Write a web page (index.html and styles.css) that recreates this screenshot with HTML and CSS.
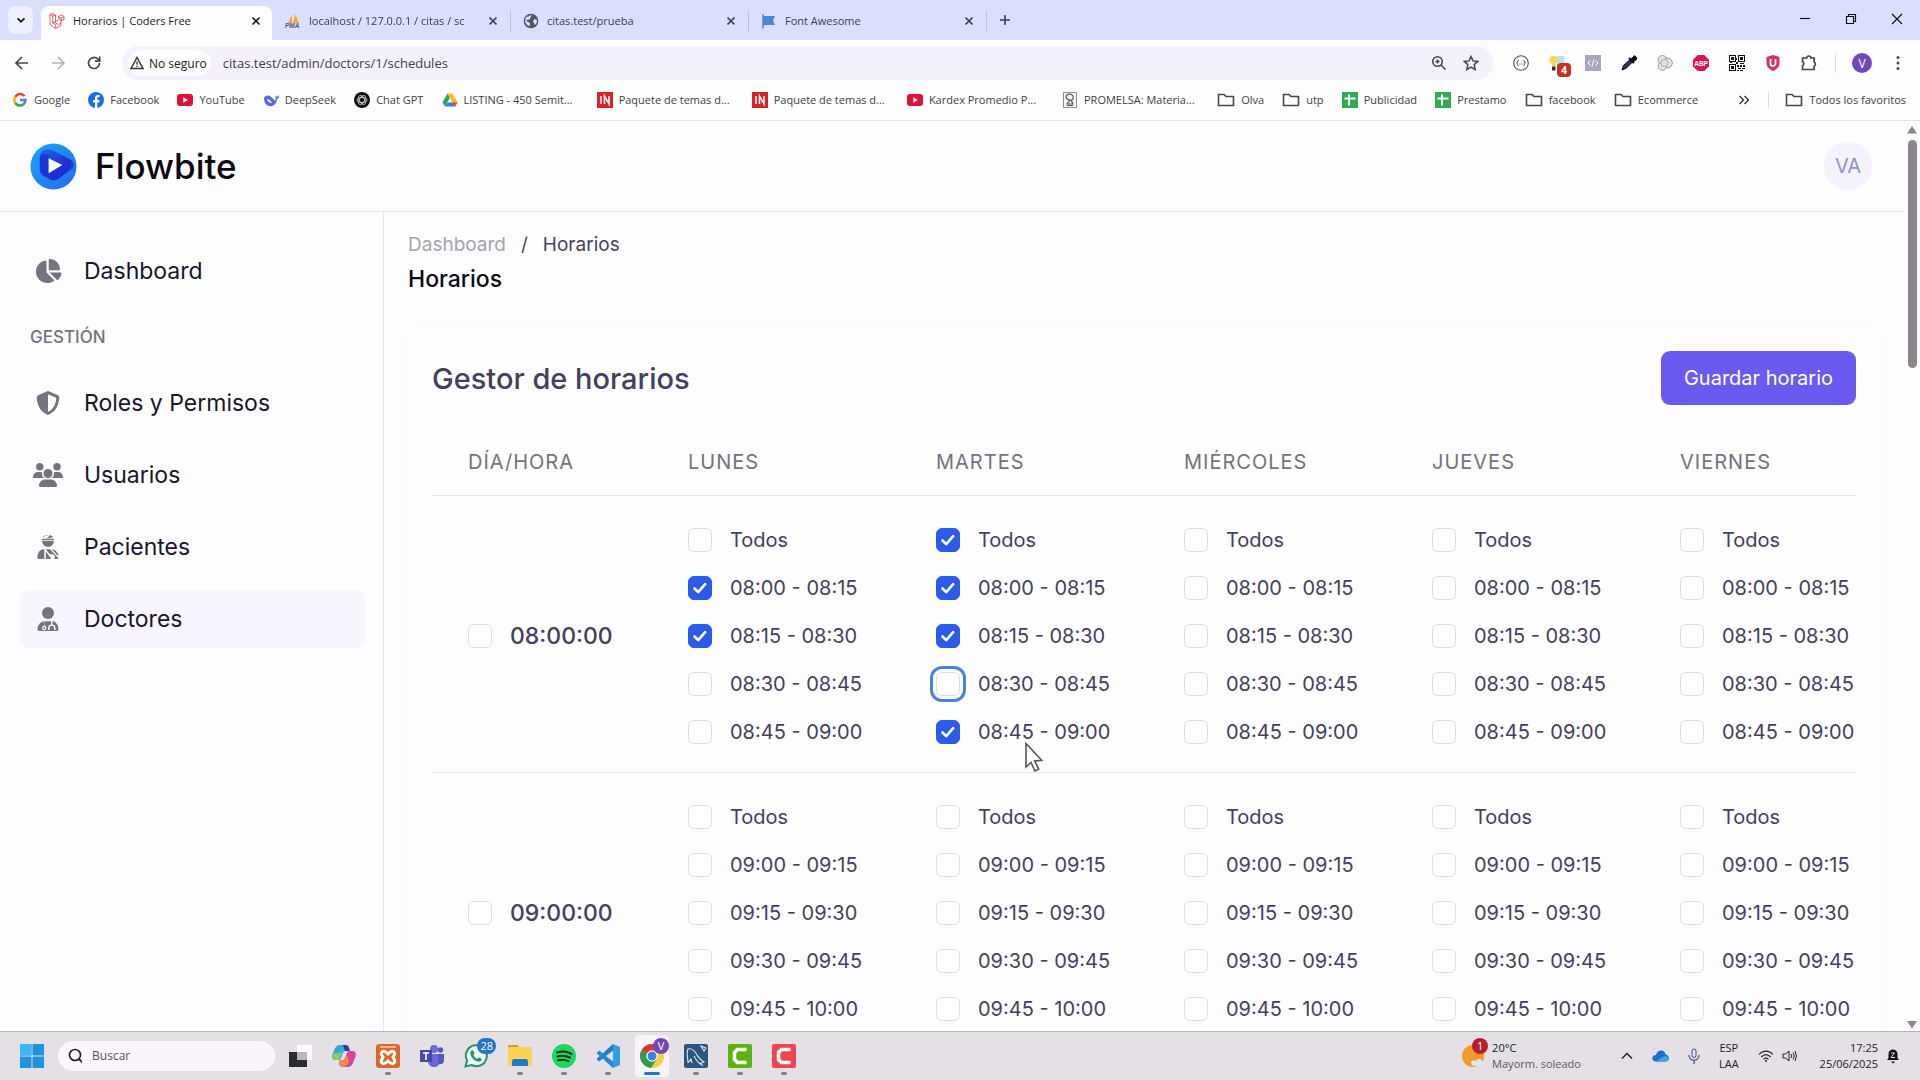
FILE: index.html
```
<!DOCTYPE html>
<html lang="es">
  <head>
    <meta charset="utf-8">
    <title>Horarios | Coders Free</title>
    <link rel="stylesheet" href="styles.css">
  </head>
  <body>
    <svg class="defs" aria-hidden="true">
      <symbol id="i-close" viewBox="0 0 16 16"><path d="M4.500 4.500l7 7M11.500 4.500l-7 7" fill="none" stroke="currentColor" stroke-width="1.700"/></symbol>
      <symbol id="i-folder" viewBox="0 0 18 16"><path d="M1.500 13.500v-11h5.500l2 2h7.500v9z" fill="none" stroke="#47464d" stroke-width="1.600" stroke-linejoin="round"/></symbol>
      <symbol id="i-youtube" viewBox="0 0 16 16"><rect y="2" width="16" height="12" rx="3" fill="#e0103a"/><path d="M6.300 5.300v5.400l4.500-2.700z" fill="#fff"/></symbol>
      <symbol id="i-sheet" viewBox="0 0 16 16"><path d="M0 0h16v16H0z" fill="#34a853"/><path d="M7 2.500v11M2.500 6.500h11" stroke="#fff" stroke-width="2"/></symbol>
      <symbol id="i-in" viewBox="0 0 16 16"><path d="M0 0h16v16H0z" fill="#d8232f"/><path d="M4 4v8M7.500 12V4l4.500 8V4" fill="none" stroke="#fff" stroke-width="1.500"/></symbol>
    </svg>

    <div class="tabs">
      <button class="tab-search" aria-label="Buscar pestañas"><svg width="10" height="10" viewBox="0 0 10 10"><path d="M1.500 3.300L5 6.700l3.500-3.400" fill="none" stroke="#1b1b2b" stroke-width="1.800"/></svg></button>
      <div class="tab active">
        <svg class="fav" viewBox="0 0 16 16"><path d="M1 1.500l3-1 2.500 1.500v8l3 1.700 2.500-1.500V7L9.500 5.500V3.500L12.500 2 15 3.500v3L12 8M1 1.500v10l5.500 4 5.500-3v-2.300M1 1.500l2.700 1.500v7l5.800-3M3.700 3l2.800-1M3.700 10l3 1.700v3.700M9.500 3.700l2.700 1.500V8M12.200 5.200l2.800-1.600" fill="none" stroke="#e8505b" stroke-width=".9"/></svg>
        <span>Horarios | Coders Free</span>
        <button aria-label="Cerrar"><svg width="16" height="16"><use href="#i-close"/></svg></button>
      </div>
      <div class="tab">
        <svg class="fav" viewBox="0 0 16 16"><path d="M3 10L7 2v8M8 10l2-9 4 9z" fill="#f5a83c"/><text x="0" y="15" font-size="6.500" font-weight="700" font-style="italic" fill="#55527c" font-family="Liberation Sans">PMA</text></svg>
        <span class="fade">localhost / 127.0.0.1 / citas / sc</span>
        <button aria-label="Cerrar"><svg width="16" height="16"><use href="#i-close"/></svg></button>
      </div>
      <div class="tab">
        <svg class="fav" viewBox="0 0 16 16"><circle cx="8" cy="8" r="7.300" fill="#55566b"/><path d="M3 4c2 0 3-1 5-2 1 2-1 2-1 4-1 1-3 0-4 2 2 1 4 1 4 3 0 1 0 2-1 2-2-1-3-2-4-5M11 6l3 1c0 3-1 4-2 5-1-1 0-2-2-3z" fill="#dce1fd"/></svg>
        <span>citas.test/prueba</span>
        <button aria-label="Cerrar"><svg width="16" height="16"><use href="#i-close"/></svg></button>
      </div>
      <div class="tab">
        <svg class="fav" viewBox="0 0 16 16"><path d="M2 1v14.500" stroke="#4b87d8" stroke-width="1.500"/><path d="M2 3h12l-2 4.500 2 4.500H2z" fill="#4b87d8"/></svg>
        <span>Font Awesome</span>
        <button aria-label="Cerrar"><svg width="16" height="16"><use href="#i-close"/></svg></button>
      </div>
      <button class="new-tab" aria-label="Nueva pestaña"><svg width="14" height="14" viewBox="0 0 14 14"><path d="M7 2v10M2 7h10" stroke="#3a3d5c" stroke-width="1.600"/></svg></button>
      <div class="window-buttons">
        <button aria-label="Minimizar"><svg width="12" height="12"><path d="M1 5.500h10" stroke="#111" stroke-width="1.200"/></svg></button>
        <button aria-label="Restaurar"><svg width="12" height="12"><path d="M1.500 3.500h7v7h-7zM3.500 3V1.500h7v7H9" fill="none" stroke="#111" stroke-width="1.200"/></svg></button>
        <button aria-label="Cerrar ventana"><svg width="12" height="12"><path d="M1 1l10 10M11 1L1 11" stroke="#111" stroke-width="1.200"/></svg></button>
      </div>
    </div>

    <div class="toolbar">
      <div class="nav-buttons">
        <button aria-label="Atrás"><svg width="16" height="16" viewBox="0 0 16 16"><path d="M14 8H2.500M8 2L2 8l6 6" fill="none" stroke="#47464d" stroke-width="1.700"/></svg></button>
        <button aria-label="Adelante"><svg width="16" height="16" viewBox="0 0 16 16"><path d="M2 8h11.500M8 2l6 6-6 6" fill="none" stroke="#b5b4ba" stroke-width="1.700"/></svg></button>
        <button aria-label="Recargar"><svg width="16" height="16" viewBox="0 0 16 16"><path d="M13.500 8A5.500 5.500 0 1 1 11.800 4L13.500 5.700M13.700 1.500v4.700H9" fill="none" stroke="#47464d" stroke-width="1.700"/></svg></button>
      </div>
      <div class="omnibox">
        <button class="insecure"><svg width="14" height="14" viewBox="0 0 14 14"><path d="M7 1.500L13 12.500H1z" fill="none" stroke="#333" stroke-width="1.400"/><path d="M7 5.500v3.300M7 9.700v1.400" stroke="#333" stroke-width="1.300"/></svg>No seguro</button>
        <input class="url" aria-label="Dirección" value="citas.test/admin/doctors/1/schedules">
        <svg width="16" height="16" viewBox="0 0 16 16"><circle cx="6.500" cy="6.500" r="4.700" fill="none" stroke="#47464d" stroke-width="1.600"/><path d="M10 10l4.500 4.500M6.500 4.500v4M4.500 6.500h4" stroke="#47464d" stroke-width="1.600"/></svg>
        <svg width="16" height="16" viewBox="0 0 16 16"><path d="M8 1.500l2 4.400 4.700.5-3.500 3.200 1 4.800L8 12l-4.200 2.400 1-4.800L1.300 6.400 6 5.900z" fill="none" stroke="#47464d" stroke-width="1.500"/></svg>
      </div>
      <div class="extensions">
        <svg viewBox="0 0 16 16"><circle cx="8" cy="8" r="7.300" fill="none" stroke="#555" stroke-width="1.100"/><path d="M5.500 5.300c-1.500 0-.5 2.400-1.800 2.700 1.300.3.300 2.700 1.800 2.700M10.500 5.300c1.500 0 .5 2.400 1.800 2.700-1.300.3-.3 2.700-1.800 2.700" fill="none" stroke="#333"/><path d="M6.500 9h.8M8.700 9h.8" stroke="#333"/></svg>
        <span class="ext-badge"><svg viewBox="0 0 16 16"><path d="M8 1h7.500v9H8z" fill="#b5e3f2"/><path d="M.5 3.500C1 0 8.500-.5 8.500 4 8.500 7 6.500 8 6.500 11H3C3 8 0 7 .5 3.500z" fill="#f7d94c"/><path d="M3 11.500h3.500v4H3z" fill="#333"/></svg><b>4</b></span>
        <svg viewBox="0 0 16 16"><path d="M0 0h16v16H0z" fill="#aaa7bd"/><path d="M5.500 5.500L3 8l2.500 2.500M10.500 5.500L13 8l-2.500 2.500M9 4.500l-2 7" fill="none" stroke="#fff"/></svg>
        <svg viewBox="0 0 16 16"><path d="M1 15l1.500-4.500L9 4.500l2.500 2.500L5.500 13z" fill="#33325a" stroke="#0b0a18"/><path d="M8 3l5 5M9.500 5.500l4-4 2 2-4 3.500z" fill="#0b0a18" stroke="#0b0a18" stroke-width="2"/></svg>
        <svg viewBox="0 0 16 16"><circle cx="5.500" cy="5" r="4.500" fill="#e6e5e8" stroke="#98979b"/><circle cx="10.500" cy="8" r="4.800" fill="#e6e5e8" stroke="#98979b"/><circle cx="5.500" cy="11" r="4.300" fill="#e6e5e8" stroke="#98979b"/><circle cx="7.500" cy="8" r="3.800" fill="#dddce0" stroke="#aeadb2"/></svg>
        <svg viewBox="0 0 16 16"><path d="M4.700 0h6.600L16 4.700v6.600L11.300 16H4.700L0 11.300V4.700z" fill="#d9164e"/><text x="1.200" y="10.500" font-size="6.500" font-weight="700" fill="#fff" font-family="Liberation Sans">ABP</text></svg>
        <svg viewBox="0 0 16 16" shape-rendering="crispEdges"><path d="M0 0h7v7H0zM9 0h7v7H9zM0 9h7v7H0z" fill="#111"/><path d="M1 1h5v5H1zM10 1h5v5h-5zM1 10h5v5H1z" fill="#fff"/><path d="M2 2h3v3H2zM11 2h3v3h-3zM2 11h3v3H2zM7 3h1v2H7zM7 7h2v2H7zM11 8h4v1h-4zM8 10h2v2H8zM11 10h2v2h-2zM14 10h2v2h-2zM9 13h3v1H9zM13 13h3v1h-3zM8 15h2v1H8zM11 15h3v1h-3zM1 7h2v1H1z" fill="#111"/></svg>
        <svg viewBox="0 0 16 16"><path d="M8 0l6.500 2v6c0 4-3 6.500-6.500 8-3.500-1.500-6.500-4-6.500-8V2z" fill="#cf3569"/><path d="M5.500 4v4.500a2.500 2.500 0 0 0 5 0V4" fill="none" stroke="#fff" stroke-width="1.700"/></svg>
        <svg viewBox="0 0 16 16"><path d="M1.500 3h4.300a2 2 0 0 1 4 0h3.400v4.300a2 2 0 0 1 0 3.700v3.500H1.500v-3.800a2 2 0 0 0 0-3.800z" fill="none" stroke="#47464d" stroke-width="1.700"/></svg>
      </div>
      <div class="profile">
        <button class="profile-pic">V</button>
        <button class="menu" aria-label="Menú"><svg width="4" height="16"><g fill="#47464d"><circle cx="2" cy="2.500" r="1.500"/><circle cx="2" cy="8" r="1.500"/><circle cx="2" cy="13.500" r="1.500"/></g></svg></button>
      </div>
    </div>

    <div class="bookmarks">
      <nav>
        <a href="#"><svg viewBox="0 0 16 16" fill="none" stroke-width="2.600"><path d="M12.500 4A5.500 5.500 0 0 0 3.300 5" stroke="#e94335"/><path d="M3.300 5a5.500 5.500 0 0 0 0 6" stroke="#fbbc05"/><path d="M3.300 11A5.500 5.500 0 0 0 11.500 12.200" stroke="#34a853"/><path d="M11.500 12.200A5.500 5.500 0 0 0 13.500 8H8" stroke="#4285f4"/></svg>Google</a>
        <a href="#"><svg viewBox="0 0 16 16"><circle cx="8" cy="8" r="8" fill="#1b6fe4"/><path d="M7 16v-5.500H5V8h2V6.300C7 4 8.300 3 10 3l1.500.1v2h-1C9.500 5.100 9.300 5.700 9.300 6.500V8h2.200l-.4 2.500H9.300V16z" fill="#fff"/></svg>Facebook</a>
        <a href="#"><svg><use href="#i-youtube"/></svg>YouTube</a>
        <a href="#"><svg viewBox="0 0 16 16"><path d="M1 6c2-3 5-3 7-1 2 1 3 3 4 4 1-1 1-3 0-5l2 .7L16 3c0 3-1 4-2 4 0 3-2 6-5 7-4 1-8-2-8-8z" fill="#5468e8"/><path d="M4 7c2 0 4 2 5 4-2 0-4-1-5-4z" fill="#fff"/></svg>DeepSeek</a>
        <a href="#"><svg viewBox="0 0 16 16"><circle cx="8" cy="8" r="8" fill="#111"/><g fill="none" stroke="#ddd" stroke-width=".8"><ellipse cx="8" cy="8" rx="5" ry="2.500"/><ellipse cx="8" cy="8" rx="5" ry="2.500" transform="rotate(60 8 8)"/><ellipse cx="8" cy="8" rx="5" ry="2.500" transform="rotate(120 8 8)"/></g></svg>Chat GPT</a>
        <a class="long" href="#"><svg viewBox="0 0 16 16"><path d="M5.500 1.500L.5 10.500 3 14.500 8 5.500z" fill="#2fa35a"/><path d="M5.500 1.500h5l5 9h-5z" fill="#f7bd27"/><path d="M3 14.500l2.500-4h10l-2.500 4z" fill="#3e78e6"/><path d="M13 14.500l-2.500-4h5z" fill="#e2483c"/></svg>LISTING - 450 Semit...</a>
        <a class="long" href="#"><svg><use href="#i-in"/></svg>Paquete de temas d...</a>
        <a class="long" href="#"><svg><use href="#i-in"/></svg>Paquete de temas d...</a>
        <a class="long" href="#"><svg><use href="#i-youtube"/></svg>Kardex Promedio P...</a>
        <a class="long" href="#"><svg viewBox="0 0 16 16"><path d="M1.500.5h13v15h-13z" fill="#f8f8fa" stroke="#8c8b93"/><path d="M4 4c2-3 6-2 7 0s0 4-2 4l2 4H5l3-4C5 8 4 6 4 4zM5 13.500h6" fill="none" stroke="#55545c" stroke-width="1.200"/></svg>PROMELSA: Materia...</a>
        <a href="#"><svg class="folder"><use href="#i-folder"/></svg>Olva</a>
        <a href="#"><svg class="folder"><use href="#i-folder"/></svg>utp</a>
        <a href="#"><svg><use href="#i-sheet"/></svg>Publicidad</a>
        <a href="#"><svg><use href="#i-sheet"/></svg>Prestamo</a>
        <a href="#"><svg class="folder"><use href="#i-folder"/></svg>facebook</a>
        <a href="#"><svg class="folder"><use href="#i-folder"/></svg>Ecommerce</a>
      </nav>
      <button class="more" aria-label="Más marcadores"><svg width="12" height="12"><path d="M1.500 2l4 4-4 4M6.500 2l4 4-4 4" fill="none" stroke="#333" stroke-width="1.400"/></svg></button>
      <a class="all" href="#"><svg class="folder"><use href="#i-folder"/></svg>Todos los favoritos</a>
    </div>

    <div class="viewport">
      <div class="page">
        <header>
          <a class="brand" href="#">
            <svg width="47" height="47" viewBox="0 0 48 48">
              <defs>
                <linearGradient id="g1" x1="0" y1="0" x2="1" y2="1"><stop offset="0" stop-color="#17a5fb"/><stop offset="1" stop-color="#256be9"/></linearGradient>
                <linearGradient id="g2" x1="0" y1="0" x2="1" y2="1"><stop offset="0" stop-color="#2467ee"/><stop offset=".6" stop-color="#1c32cf"/><stop offset="1" stop-color="#2266ea"/></linearGradient>
              </defs>
              <circle cx="24" cy="24" r="23.500" fill="url(#g1)"/>
              <path d="M10 14c1-7 7-9 14-6l16 8c5 3 6 6 4 10l-14 10c-4 3-8 3-11 0-5-2-8-3-9-8z" fill="url(#g2)"/>
              <path d="M20 31l12-7c4-2 5-5 4-9 7 4 8 8 3 13L28 37c-5 2-8 0-8-6z" fill="#1c2fd0"/>
              <path d="M10 16c0-5 5-6 9-3v22c-6-2-9-5-9-10z" fill="#1b35d6"/>
              <path d="M19 15.500l14 7-14 8.500z" fill="#fff"/>
            </svg>
            Flowbite
          </a>
          <button class="avatar">VA</button>
        </header>

        <div class="body">
          <aside>
            <a href="#"><svg viewBox="0 0 576 512"><path d="M304 240V16.600c0-9 7-16.600 16-16.600C443.700 0 544 100.300 544 224c0 9-7.600 16-16.600 16H304zM32 272C32 150.700 122.100 50.300 239 34.300c9.200-1.300 17 6.100 17 15.400V288L412.500 444.500c6.700 6.700 6.200 17.700-1.500 23.100C371.800 495.600 323.800 512 272 512C139.500 512 32 404.600 32 272zm526.400 16c9.300 0 16.600 7.800 15.400 17c-7.700 55.900-34.600 105.600-73.900 142.300c-6 5.600-15.400 5.200-21.200-.7L320 288H558.400z"/></svg>Dashboard</a>
            <h2>GESTIÓN</h2>
            <a href="#"><svg viewBox="0 0 512 512"><path d="M256 0c4.600 0 9.200 1 13.400 2.900L457.700 82.800c22 9.300 38.400 31 38.300 57.200c-.5 99.200-41.300 280.700-213.600 363.200c-16.700 8-36.100 8-52.800 0C57.300 420.700 16.500 239.200 16 140c-.1-26.200 16.300-47.900 38.300-57.200L242.700 2.900C246.800 1 251.400 0 256 0zm0 66.800V444.800C394 378 431.100 230.100 432 141.400L256 66.800z"/></svg>Roles y Permisos</a>
            <a href="#"><svg viewBox="0 0 640 512"><circle cx="144" cy="80" r="80"/><circle cx="512" cy="80" r="80"/><circle cx="320" cy="224" r="96"/><path d="M0 298.700C0 239.800 47.800 192 106.700 192h42.600c16 0 31 3.500 44.600 9.700-8 55 8 90 45 118.300H21.300C9.600 320 0 310.400 0 298.700zM401 320c38-28 53-64 45-118.300 13.600-6.200 28.600-9.700 44.600-9.700h42.600C592.200 192 640 239.800 640 298.700c0 11.700-9.600 21.300-21.300 21.300zM128 485.300C128 411.700 187.700 352 261.300 352h117.400C452.300 352 512 411.700 512 485.300c0 14.700-12 26.700-26.700 26.700H154.700c-14.700 0-26.700-12-26.700-26.700z"/></svg>Usuarios</a>
            <a href="#"><svg viewBox="0 0 448 512"><path d="M240 0c38 0 72 17 94 48L200 75 268 2zM232 0L113 48C138 15 180-2 232 0zM98 80h252v32H98zM98 128h252c0 70-56 126-126 126S98 198 98 128zM120 304h24v208H22C-2 512-6 488 0 452c12-84 54-140 120-148zM176 304h92l180 190c-2 10-10 18-24 18h-70c36-50 12-100-40-100h-50zM176 345l120 167H176zM300 304c84 8 140 66 148 152L336 338z"/></svg>Pacientes</a>
            <a class="current" href="#"><svg viewBox="0 0 448 512"><circle cx="224" cy="128" r="128"/><path d="M0 482c0-98 64-178 152-178v88c-34 8-56 32-56 62a46 46 0 1 0 92 0c0-28-10-50-28-60v-90h128v68c-44 8-64 36-64 80v36h32v-36c0-70 96-70 96 0v36h32v-36c0-44-20-72-64-80v-66c80 8 128 84 128 176 0 16-12 30-30 30H30c-18 0-30-14-30-30z"/><circle cx="142" cy="454" r="20"/></svg>Doctores</a>
          </aside>

          <main>
            <nav class="breadcrumb"><a href="#">Dashboard</a><span>/</span><span>Horarios</span></nav>
            <h1>Horarios</h1>

            <section class="card">
              <div class="card-head">
                <h2>Gestor de horarios</h2>
                <button>Guardar horario</button>
              </div>
              <div class="table-wrap">
                <table>
                  <thead>
                    <tr>
                      <th>DÍA/HORA</th>
                      <th>LUNES</th>
                      <th>MARTES</th>
                      <th>MIÉRCOLES</th>
                      <th>JUEVES</th>
                      <th>VIERNES</th>
                    </tr>
                  </thead>
                  <tbody id="schedule"></tbody>
                </table>
              </div>
            </section>
          </main>
        </div>
      </div>
      <div class="scrollbar">
        <svg width="10" height="8"><path d="M5 0l5 7.500H0z" fill="#8b868c"/></svg>
        <div class="track"><div class="thumb"></div></div>
        <svg width="10" height="8"><path d="M5 7.500L0 0h10z" fill="#8b868c"/></svg>
      </div>
    </div>

    <div class="taskbar">
      <button class="start" aria-label="Inicio"><svg width="24" height="24"><path d="M0 0h11.500v11.500H0zM12.500 0H24v11.500H12.500zM0 12.500h11.500V24H0zM12.500 12.500H24V24H12.500z" fill="#1f94dc"/><path d="M0 0h11.500v11.500H0z" fill="#3db6ee"/></svg></button>
      <label class="search">
        <svg width="16" height="16"><circle cx="7" cy="7" r="5.500" fill="none" stroke="#222" stroke-width="1.700"/><path d="M11 11l4 4" stroke="#222" stroke-width="1.900"/></svg>
        <input aria-label="Buscar" placeholder="Buscar">
      </label>
      <div class="apps">
        <button aria-label="Vista de tareas"><svg viewBox="0 0 24 24"><path d="M9 1h15v15H9z" fill="#fcfbfd"/><path d="M1 8h18v15H1z" fill="#2b2a30"/><path d="M9 8h10v8H9z" fill="#b9b7bc"/></svg></button>
        <button aria-label="Copilot"><svg viewBox="0 0 24 24"><path d="M8 1h6c3 0 3 4 4 6h-5c-3 0-3 9-6 9H4c-5 0-4-4-3-7 2-5 3-8 7-8z" fill="#35a6df"/><path d="M2 9c3 0 5 2 8-3l-3 10H4c-4 0-4-3-2-7z" fill="#8fce57"/><path d="M16 23h-6c-3 0-3-4-3-7h4c3 0 3-9 6-9h3c5 0 4 4 3 7-2 5-3 9-7 9z" fill="#d6459b"/><path d="M7 16h4c2 0 3-3 4-5l2 6c-1 4-4 6-7 6-2 0-3-4-3-7z" fill="#f48a4d"/><path d="M11 1h3c3 0 3 4 4 6h-5z" fill="#253e9d"/></svg></button>
        <button class="open" aria-label="XAMPP"><svg viewBox="0 0 24 24"><rect width="24" height="24" rx="3" fill="#dc682c"/><path d="M4 3h16" stroke="#f8c8a8" stroke-width="1.500"/><path d="M6 8c2-2 4 0 6 2 2-2 4-4 6-2s0 3-1 5c1 2 3 4 1 6s-4 0-6-2c-2 2-4 4-6 2s0-4 1-6c-1-2-3-3-1-5z" fill="none" stroke="#fff" stroke-width="3"/></svg></button>
        <button aria-label="Teams"><svg viewBox="0 0 24 24"><circle cx="14" cy="5" r="4" fill="#6f6ad6"/><circle cx="20.500" cy="6" r="2.700" fill="#5457bb"/><path d="M8 10h12v7c0 8-12 8-12 0z" fill="#6d67d2"/><path d="M18 10h6v6c0 4-3 5-6 4z" fill="#5457bb"/><path d="M0 6h12v12H0z" fill="#444aa8"/><path d="M3 9h6M6 9v7" stroke="#fff" stroke-width="1.600"/></svg></button>
        <button aria-label="WhatsApp"><svg viewBox="0 0 24 24"><path d="M1.500 22.500l1.500-6A10.500 10.500 0 1 1 7.500 21z" fill="#eef5f1" stroke="#23936a" stroke-width="2"/><path d="M7 7c2-2 3 1 3.500 2.500L9.300 11c1 2 2.200 3.200 4 4l1.500-1.500c2 .5 4 1.500 2 3.500C12 20 4 11 7 7z" fill="#23936a"/></svg><b class="badge">28</b></button>
        <button class="open" aria-label="Explorador"><svg viewBox="0 0 24 24"><path d="M0 5V2c0-1 1-1 1-1h8l3 3z" fill="#d59b1f"/><rect y="3" width="24" height="19" rx="1.500" fill="#f9d253"/><path d="M4 22v-4c0-2 1-3 2-3h12c1 0 2 1 2 3v4z" fill="#2179c6"/></svg></button>
        <button class="open" aria-label="Spotify"><svg viewBox="0 0 24 24"><circle cx="12" cy="12" r="12" fill="#1ed760"/><path d="M5 8.500c5-1.500 10-1 14.500 1.300M5.500 12.500c4.500-1.300 8.500-.8 12.500 1.200M6 16.200c4-1 7-.6 10.500 1" fill="none" stroke="#10301c" stroke-width="2" stroke-linecap="round"/></svg></button>
        <button class="open" aria-label="Visual Studio Code"><svg viewBox="0 0 24 24"><path d="M17 6.500L3 17.500 1 15.500v-1L17 0z" fill="#1f7ec8"/><path d="M17 17.500L3 6.500 1 8.500v1L17 24z" fill="#2389d3"/><path d="M17 0l7 3v18l-7 3z" fill="#2fa0e6"/></svg></button>
        <button class="open focused" aria-label="Chrome"><svg viewBox="0 0 24 24"><circle cx="12" cy="12" r="12" fill="#f9cf3c"/><path d="M12 12L1.600 6A12 12 0 0 1 22.400 6z" fill="#d9382c"/><path d="M12 12L1.600 6A12 12 0 0 0 11 24l6-9z" fill="#2e9c4e"/><circle cx="12" cy="12" r="5.700" fill="#fff"/><circle cx="12" cy="12" r="4.500" fill="#3d80ea"/></svg><b class="badge purple">V</b></button>
        <button class="open" aria-label="MySQL Workbench"><svg viewBox="0 0 24 24"><rect width="24" height="24" rx="2" fill="#2b5680"/><path d="M4 19c0-5-2-10 0-14 4-1 7 2 9 6 2 3 3 5 7 7l-3 1 1 2c-4-2-6-5-8-9M4 19l3-4 1 4M17 2l5 2-2 3z" fill="none" stroke="#dbe7f2" stroke-width="1.100"/></svg></button>
        <button class="open" aria-label="Camtasia"><svg viewBox="0 0 24 24"><rect width="24" height="24" rx="2" fill="#5bb30f"/><path d="M18.500 5.500h-9l-3 3v7l3 3h9" fill="none" stroke="#fff" stroke-width="3.500"/></svg></button>
        <button class="open" aria-label="Camtasia Recorder"><svg viewBox="0 0 24 24"><rect width="24" height="24" rx="2" fill="#ee4552"/><path d="M18.500 5.500h-9l-3 3v7l3 3h9" fill="none" stroke="#fff" stroke-width="3.500"/></svg></button>
      </div>
      <div class="weather">
        <span class="sun"><svg width="24" height="24"><circle cx="11" cy="12" r="11" fill="#f29a2e"/><path d="M10 21c-3-4 2-6 4-4 2-4 7-2 6 1 4 0 3 4 0 4h-8z" fill="#dbe6f7"/></svg><b class="badge red">1</b></span>
        <p>20°C<br><span>Mayorm. soleado</span></p>
      </div>
      <div class="tray">
        <svg width="12" height="12"><path d="M1 8.500l5-5 5 5" fill="none" stroke="#222" stroke-width="1.500"/></svg>
        <svg width="17" height="12" viewBox="0 0 17 12"><path d="M4 11.500C-1 11.500-1 5 4 5c1-6 9-6 9.500-.5C18 5 18 11.500 13.500 11.500z" fill="#1f6fc8"/><path d="M4 11.500L12 6c6 0 6 5.500 1.500 5.500z" fill="#3aa5ea"/></svg>
        <svg width="12" height="16"><rect x="4" y="1" width="4" height="8.500" rx="2" fill="#e3e5f3" stroke="#3c4f8c"/><path d="M1 7c0 7 10 7 10 0M6 12.500V16" fill="none" stroke="#3c4f8c" stroke-width="1.200"/></svg>
        <p class="lang">ESP<br>LAA</p>
        <svg width="16" height="12"><path d="M1 4.500c4-4.500 10-4.500 14 0M3.300 7c3-3 6.400-3 9.400 0M5.500 9.300c1.500-1.500 3.500-1.500 5 0" fill="none" stroke="#222" stroke-width="1.100"/><circle cx="8" cy="11" r="1" fill="#222"/></svg>
        <svg width="15" height="12"><path d="M1 4h2.500L7 1v10L3.500 8H1z" fill="none" stroke="#222"/><path d="M9 4q1.500 2 0 4M11 2.500q2.500 3.500 0 7M13 1q3 5 0 10" fill="none" stroke="#222"/></svg>
      </div>
      <p class="clock">17:25<br>25/06/2025</p>
      <svg class="bell" width="14" height="16"><path d="M1 12l1.500-2V6c0-6 9-6 9 0v4l1.500 2zM5 13.500h4L7 15.500z" fill="#111"/><path d="M5 5h3.500L5 9.500h4" fill="none" stroke="#e2dde3"/></svg>
    </div>

    <svg class="cursor" width="20" height="32" viewBox="0 0 20 32"><path d="M2 1.500V25l5-4.500 4 8.500 3.700-1.800-4-8.200 7-.7z" fill="#fff" stroke="#55535c" stroke-width="1.600"/></svg>

    <script src="script.js"></script>
  </body>
</html>
```
FILE: styles.css
```
* {
  box-sizing: border-box;
}
body {
  margin: 0;
  height: 100vh;
  display: flex;
  flex-direction: column;
  overflow: hidden;
  background: #fdfdfe;
  font-family: "Open Sans", "Noto Sans", sans-serif;
  font-size: 12px;
  color: #3f3e46;
}
button {
  border: 0;
  padding: 0;
  background: none;
  font: inherit;
  color: inherit;
}
a {
  color: inherit;
  text-decoration: none;
}
p,
h1,
h2 {
  margin: 0;
}
.defs {
  position: absolute;
  width: 0;
  height: 0;
}

/* browser tabs */
.tabs {
  display: flex;
  flex: none;
  height: 40px;
  padding: 6px 0 0 8px;
  background: #dadffd;
  font-size: 11px;
  color: #3a3d5c;
}
.tab-search {
  display: grid;
  place-items: center;
  width: 25px;
  height: 28px;
  margin-right: 8px;
  border-radius: 8px;
  background: #eef0fe;
}
.tab {
  display: flex;
  align-items: center;
  gap: 8px;
  width: 238px;
  padding: 0 9px 5px 13px;
}
.tab + .tab + .tab {
  background: linear-gradient(#b9bfdd, #b9bfdd) 0 5px / 1px 20px no-repeat;
}
.tab span {
  flex: 1;
  white-space: nowrap;
  overflow: hidden;
}
.tab .fade {
  mask-image: linear-gradient(90deg, #000 92%, transparent);
}
.tab button {
  display: flex;
}
.tab.active {
  width: 231px;
  padding: 0 8px 5px;
  border-radius: 8px 8px 0 0;
  background: #fdfdfe;
  color: #1b1b2b;
}
.fav {
  width: 16px;
  height: 16px;
  flex: none;
}
.new-tab {
  display: flex;
  align-items: center;
  padding: 0 12px 6px;
  background: linear-gradient(#b9bfdd, #b9bfdd) 0 5px / 1px 20px no-repeat;
}
.window-buttons {
  display: flex;
  margin-left: auto;
}
.window-buttons button {
  width: 46px;
  padding-bottom: 6px;
}

/* address bar */
.toolbar {
  display: flex;
  align-items: center;
  flex: none;
  height: 46px;
  padding: 0 20px 0 14px;
}
.nav-buttons {
  display: flex;
  gap: 20px;
  margin-right: 20px;
}
.nav-buttons button {
  display: flex;
}
.omnibox {
  display: flex;
  align-items: center;
  flex: 1;
  gap: 16px;
  height: 34px;
  padding: 0 14px 0 6px;
  border-radius: 17px;
  background: #f4f1fd;
}
.insecure {
  display: flex;
  align-items: center;
  gap: 5px;
  height: 26px;
  margin-right: -4px;
  border-radius: 13px;
  padding: 0 4px 0 2px;
  background: #fdfdfe;
  color: #222;
}
.url {
  flex: 1;
  border: 0;
  padding: 0;
  background: none;
  font: inherit;
  font-size: 13px;
  color: #3f3e46;
}
.extensions {
  display: flex;
  gap: 20px;
  margin: 0 18px 0 20px;
}
.extensions svg {
  display: block;
  width: 16px;
  height: 16px;
}
.ext-badge {
  position: relative;
}
.ext-badge b {
  position: absolute;
  left: 8px;
  top: 8px;
  width: 14px;
  height: 14px;
  border-radius: 4px;
  background: #c9301f;
  color: #fff;
  font-size: 10px;
  line-height: 14px;
  text-align: center;
}
.profile {
  display: flex;
  align-items: center;
  gap: 24px;
  padding-left: 16px;
  border-left: 1px solid #dcd9e6;
}
.profile-pic {
  width: 20px;
  height: 20px;
  border-radius: 50%;
  background: #7248b9;
  color: #fff;
}
.menu {
  display: flex;
}

/* bookmarks bar */
.bookmarks {
  display: flex;
  align-items: center;
  flex: none;
  height: 35px;
  padding: 0 14px 7px 12px;
  border-bottom: 1px solid #e3e2e8;
  font-size: 11px;
  white-space: nowrap;
}
.bookmarks nav {
  display: flex;
  flex: 1;
  justify-content: space-between;
}
.bookmarks a {
  display: flex;
  align-items: center;
  gap: 6px;
}
.bookmarks a.long {
  min-width: 137px;
}
.bookmarks a svg {
  width: 16px;
  height: 16px;
}
.bookmarks a .folder {
  width: 18px;
}
.more {
  display: flex;
  margin: 0 18px 0 40px;
}
.all {
  padding-left: 16px;
  border-left: 1px solid #dcd9e6;
}

/* page */
.viewport {
  display: flex;
  flex: 1;
  min-height: 0;
  font-family: Inter, "Open Sans", sans-serif;
}
.page {
  flex: 1;
  min-width: 0;
  display: flex;
  flex-direction: column;
  overflow: hidden;
}
.scrollbar {
  display: flex;
  flex-direction: column;
  align-items: center;
  gap: 6px;
  width: 16px;
  padding: 5px 0 2px;
}
.track {
  flex: 1;
}
.thumb {
  width: 9px;
  height: 26%;
  border-radius: 5px;
  background: #8b868c;
}
header {
  display: flex;
  align-items: center;
  justify-content: space-between;
  flex: none;
  height: 91px;
  padding: 0 32px 0 30px;
  border-bottom: 1px solid #e3e2e8;
}
.brand {
  display: flex;
  align-items: center;
  gap: 18px;
  font-size: 35px;
  font-weight: 500;
  color: #0a0a0f;
}
.avatar {
  width: 48px;
  height: 48px;
  border-radius: 50%;
  background: #f5f2fe;
  color: #8b92d3;
  font-size: 20px;
}
.body {
  display: flex;
  flex: 1;
  min-height: 0;
}
aside {
  display: flex;
  flex-direction: column;
  gap: 14px;
  flex: none;
  width: 384px;
  padding: 30px 18px 0 20px;
  border-right: 1px solid #e8e5ef;
}
aside a {
  display: flex;
  align-items: center;
  gap: 20px;
  height: 58px;
  padding: 0 12px;
  border-radius: 9px;
  font-size: 23px;
  color: #17162a;
}
aside a.current {
  background: #f9f5fe;
}
aside svg {
  width: 32px;
  height: 24px;
  fill: #76727f;
}
aside h2 {
  height: 46px;
  padding-left: 10px;
  font-size: 17px;
  font-weight: 500;
  line-height: 46px;
  color: #76727f;
}
main {
  flex: 1;
  min-width: 0;
  padding: 18px 24px 0;
}
.breadcrumb {
  display: flex;
  gap: 15px;
  font-size: 19px;
  line-height: 30px;
  color: #45455a;
}
.breadcrumb a {
  color: #a5a2ac;
}
h1 {
  font-size: 23px;
  font-weight: 500;
  line-height: 38px;
  color: #0a0a0f;
}
.card {
  margin-top: 29px;
  padding: 24px 24px 0;
  border-radius: 12px;
  box-shadow: 0 0 3px #f7f4fa;
  color: #43425a;
}
.card-head {
  display: flex;
  align-items: center;
  justify-content: space-between;
  margin-bottom: 24px;
}
.card-head h2 {
  font-size: 29px;
  font-weight: 500;
}
.card-head button {
  height: 54px;
  padding: 0 23px;
  border-radius: 9px;
  background: #6b5af0;
  color: #fff;
  font-size: 20px;
}
.table-wrap {
  overflow: hidden;
}
table {
  border-collapse: separate;
  border-spacing: 0;
}
th,
td {
  padding: 26px 36px 22px;
  border-bottom: 1px solid #e9e7ee;
  text-align: left;
  white-space: nowrap;
}
th {
  min-width: 248px;
  padding: 18px 36px;
  font-size: 20px;
  font-weight: 400;
  line-height: 30px;
  letter-spacing: 1px;
  color: #75727f;
}
th:first-child {
  min-width: 220px;
}
td label {
  display: flex;
  align-items: center;
  gap: 18px;
  height: 36px;
  font-size: 20px;
  line-height: 36px;
}
td label + label {
  margin-top: 12px;
}
td:first-child label {
  font-size: 23px;
  font-weight: 500;
}
td input {
  appearance: none;
  flex: none;
  width: 24px;
  height: 24px;
  margin: 0;
  border: 1px solid #dfdce6;
  border-radius: 6px;
  background: #fff;
}
td input:checked {
  border-color: #2b5ce8;
  background: #2b5ce8 url("data:image/svg+xml,%3Csvg xmlns='http://www.w3.org/2000/svg' viewBox='0 0 22 22'%3E%3Cpath d='M5.500 11.500l3.700 3.700 7-8' fill='none' stroke='white' stroke-width='2.600' stroke-linecap='round' stroke-linejoin='round'/%3E%3C/svg%3E");
}
td input:focus {
  outline: none;
  box-shadow: 0 0 0 3px #fff, 0 0 0 6px #4d7fe3;
}

/* windows taskbar */
.taskbar {
  display: flex;
  align-items: center;
  flex: none;
  height: 49px;
  padding: 0 20px;
  border-top: 1px solid #b9b4ba;
  background: #e5dfe6;
  line-height: 16px;
  color: #1d1c22;
}
.start,
.apps button {
  display: flex;
}
.search {
  display: flex;
  align-items: center;
  gap: 10px;
  width: 217px;
  height: 30px;
  margin: 0 8px 0 14px;
  padding: 0 10px;
  border-radius: 15px;
  background: #faf6fb;
}
.search input {
  width: 100%;
  border: 0;
  padding: 0;
  background: none;
  font: inherit;
}
.search input::placeholder {
  color: #55535c;
}
.apps {
  display: flex;
  gap: 10px;
}
.apps button {
  position: relative;
  align-items: center;
  justify-content: center;
  width: 34px;
  height: 42px;
  border-radius: 4px;
}
.apps svg {
  width: 24px;
  height: 24px;
}
.apps .focused {
  background: #f7f3f8;
}
.open::after {
  content: "";
  position: absolute;
  bottom: 2px;
  width: 6px;
  height: 3px;
  border-radius: 2px;
  background: #85818a;
}
.focused::after {
  width: 16px;
  background: #1f76c2;
}
.badge {
  position: absolute;
  right: -3px;
  top: 3px;
  min-width: 16px;
  height: 16px;
  padding: 0 3px;
  border-radius: 8px;
  background: #1f76c2;
  color: #fff;
  font-size: 11px;
  font-weight: 400;
  line-height: 16px;
  text-align: center;
}
.badge.purple {
  right: 0;
  background: #7248b9;
}
.badge.red {
  top: -6px;
  right: -2px;
  background: #b3202c;
}
.weather {
  display: flex;
  align-items: center;
  gap: 6px;
  margin-left: auto;
  font-size: 11px;
}
.weather p span {
  color: #5c5963;
}
.sun {
  position: relative;
  display: flex;
}
.tray {
  display: flex;
  align-items: center;
  gap: 19px;
  margin-left: 40px;
  font-size: 11px;
}
.tray svg:last-child {
  margin-left: -11px;
}
.lang {
  text-align: center;
}
.clock {
  margin: 0 8px 0 23px;
  font-size: 11px;
  text-align: right;
}
.cursor {
  position: absolute;
  left: 1024px;
  top: 742px;
}
```
FILE: script.js
```
const days = ["lunes", "martes", "miercoles", "jueves", "viernes"]
const checked = {
  "lunes-8": [1, 2],
  "martes-8": [0, 1, 2, 4],
}

function pad(n) {
  return String(n).padStart(2, "0")
}

function makeCheck(id, text, isChecked) {
  return `<label for="${id}"><input type="checkbox" id="${id}" ${isChecked ? "checked" : ""}>${text}</label>`
}

// "Todos" plus the four quarters of the hour
function slots(hour) {
  const list = ["Todos"]

  for (let q = 0; q < 4; q++) {
    const end = q === 3 ? `${pad(hour + 1)}:00` : `${pad(hour)}:${pad((q + 1) * 15)}`
    list.push(`${pad(hour)}:${pad(q * 15)} - ${end}`)
  }

  return list
}

function renderSchedule(hours) {
  document.getElementById("schedule").innerHTML = hours.map(hour => {
    const cells = days.map(day => {
      const on = checked[`${day}-${hour}`] || []
      return `<td>${slots(hour).map((text, i) => makeCheck(`${day}-${hour}-${i}`, text, on.includes(i))).join("")}</td>`
    })

    return `<tr><td>${makeCheck(`hora-${hour}`, `${pad(hour)}:00:00`)}</td>${cells.join("")}</tr>`
  }).join("")
}

renderSchedule([8, 9])
document.getElementById("martes-8-3").focus({ preventScroll: true })
```
